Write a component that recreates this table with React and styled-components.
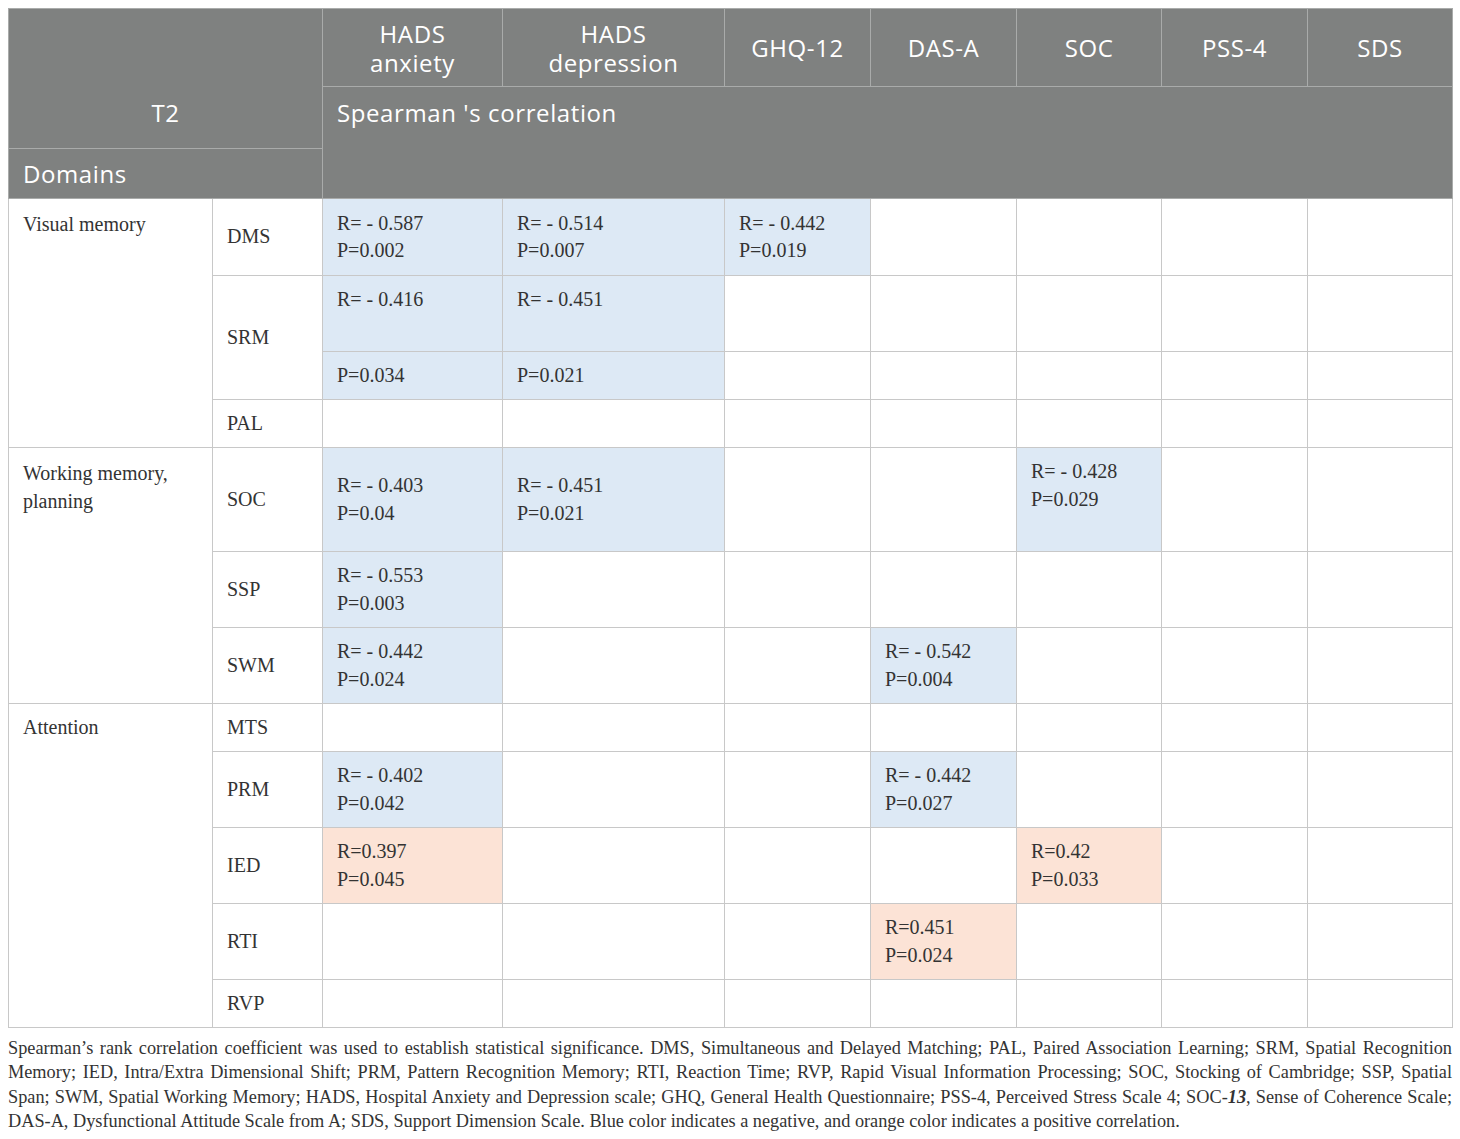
import styled, { createGlobalStyle } from "styled-components";

const GlobalStyle = createGlobalStyle`
  body {
    margin: 0;
    background: #fff;
  }
`;

const Page = styled.div`
  padding: 8px 8px 0 8px;
  width: 1444px;
`;

const Table = styled.table`
  border-collapse: collapse;
  table-layout: fixed;
  width: 1444px;
  border: 1px solid #c4c4c4;
`;

const HeadCell = styled.th`
  background: #7f8180;
  color: #fff;
  font-family: "Open Sans", Lato, sans-serif;
  font-weight: 400;
  font-size: 24px;
  letter-spacing: 0.6px;
  line-height: 29px;
  border: 1px solid #a9abaa;
  padding: ${(p) => p.$pad || "0 14px"};
  text-align: ${(p) => p.$align || "center"};
  vertical-align: ${(p) => p.$valign || "middle"};
`;

const HeadRow = styled.tr`
  height: ${(p) => p.$h}px;
`;

const Row = styled.tr`
  height: ${(p) => p.$h}px;
`;

const Cell = styled.td`
  font-family: "Liberation Serif", "Times New Roman", serif;
  font-size: 20px;
  line-height: 27.5px;
  color: #333;
  border: 1px solid #c8c8c8;
  padding: ${(p) => p.$pad || "0 14px"};
  vertical-align: ${(p) => p.$valign || "middle"};
  background: ${(p) =>
    p.$tone === "neg" ? "#dde9f5" : p.$tone === "pos" ? "#fce3d6" : "#fff"};
`;

const Note = styled.p`
  margin: 8px 0 0 0;
  font-family: "Liberation Serif", "Times New Roman", serif;
  font-size: 18.3px;
  line-height: 24.3px;
  color: #333;
  text-align: justify;
`;

const widths = [204, 110, 180, 222, 146, 146, 145, 146, 145];

const Val = ({ r, p }) => (
  <>
    {r && <div>{r}</div>}
    {p && <div>{p}</div>}
  </>
);

const blank = (n) => Array.from({ length: n }, (_, i) => i);

const App = () => {
  return (
    <Page>
      <GlobalStyle />
      <Table>
        <colgroup>
          {widths.map((w, i) => (
            <col key={i} style={{ width: w }} />
          ))}
        </colgroup>
        <thead>
          <HeadRow $h={78}>
            <HeadCell colSpan={2} rowSpan={2} $valign="bottom" $pad="0 14px 21px">
              T2
            </HeadCell>
            <HeadCell>HADS<br />anxiety</HeadCell>
            <HeadCell>HADS<br />depression</HeadCell>
            <HeadCell>GHQ-12</HeadCell>
            <HeadCell>DAS-A</HeadCell>
            <HeadCell>SOC</HeadCell>
            <HeadCell>PSS-4</HeadCell>
            <HeadCell>SDS</HeadCell>
          </HeadRow>
          <HeadRow $h={62}>
            <HeadCell colSpan={7} rowSpan={2} $align="left" $valign="top" $pad="11px 14px 0">
              Spearman 's correlation
            </HeadCell>
          </HeadRow>
          <HeadRow $h={50}>
            <HeadCell colSpan={2} $align="left">Domains</HeadCell>
          </HeadRow>
        </thead>
        <tbody>
          <Row $h={77}>
            <Cell rowSpan={4} $valign="top" $pad="12px 14px">Visual memory</Cell>
            <Cell>DMS</Cell>
            <Cell $tone="neg"><Val r="R= - 0.587" p="P=0.002" /></Cell>
            <Cell $tone="neg"><Val r="R= - 0.514" p="P=0.007" /></Cell>
            <Cell $tone="neg"><Val r="R= - 0.442" p="P=0.019" /></Cell>
            {blank(4).map((i) => <Cell key={i} />)}
          </Row>
          <Row $h={76}>
            <Cell rowSpan={2}>SRM</Cell>
            <Cell $tone="neg" $valign="top" $pad="10px 14px">R= - 0.416</Cell>
            <Cell $tone="neg" $valign="top" $pad="10px 14px">R= - 0.451</Cell>
            {blank(5).map((i) => <Cell key={i} />)}
          </Row>
          <Row $h={48}>
            <Cell $tone="neg">P=0.034</Cell>
            <Cell $tone="neg">P=0.021</Cell>
            {blank(5).map((i) => <Cell key={i} />)}
          </Row>
          <Row $h={48}>
            <Cell>PAL</Cell>
            {blank(7).map((i) => <Cell key={i} />)}
          </Row>

          <Row $h={104}>
            <Cell rowSpan={3} $valign="top" $pad="12px 14px">Working memory,<br />planning</Cell>
            <Cell>SOC</Cell>
            <Cell $tone="neg"><Val r="R= - 0.403" p="P=0.04" /></Cell>
            <Cell $tone="neg"><Val r="R= - 0.451" p="P=0.021" /></Cell>
            <Cell />
            <Cell />
            <Cell $tone="neg" $valign="top" $pad="10px 14px"><Val r="R= -  0.428" p="P=0.029" /></Cell>
            <Cell />
            <Cell />
          </Row>
          <Row $h={76}>
            <Cell>SSP</Cell>
            <Cell $tone="neg"><Val r="R= - 0.553" p="P=0.003" /></Cell>
            {blank(6).map((i) => <Cell key={i} />)}
          </Row>
          <Row $h={76}>
            <Cell>SWM</Cell>
            <Cell $tone="neg"><Val r="R= - 0.442" p="P=0.024" /></Cell>
            <Cell />
            <Cell />
            <Cell $tone="neg"><Val r="R= - 0.542" p="P=0.004" /></Cell>
            <Cell />
            <Cell />
            <Cell />
          </Row>

          <Row $h={48}>
            <Cell rowSpan={5} $valign="top" $pad="10px 14px">Attention</Cell>
            <Cell>MTS</Cell>
            {blank(7).map((i) => <Cell key={i} />)}
          </Row>
          <Row $h={76}>
            <Cell>PRM</Cell>
            <Cell $tone="neg"><Val r="R= - 0.402" p="P=0.042" /></Cell>
            <Cell />
            <Cell />
            <Cell $tone="neg"><Val r="R= - 0.442" p="P=0.027" /></Cell>
            <Cell />
            <Cell />
            <Cell />
          </Row>
          <Row $h={76}>
            <Cell>IED</Cell>
            <Cell $tone="pos"><Val r="R=0.397" p="P=0.045" /></Cell>
            <Cell />
            <Cell />
            <Cell />
            <Cell $tone="pos"><Val r="R=0.42" p="P=0.033" /></Cell>
            <Cell />
            <Cell />
          </Row>
          <Row $h={76}>
            <Cell>RTI</Cell>
            <Cell />
            <Cell />
            <Cell />
            <Cell $tone="pos"><Val r="R=0.451" p="P=0.024" /></Cell>
            <Cell />
            <Cell />
            <Cell />
          </Row>
          <Row $h={48}>
            <Cell>RVP</Cell>
            {blank(7).map((i) => <Cell key={i} />)}
          </Row>
        </tbody>
      </Table>
      <Note>
        Spearman’s rank correlation coefficient was used to establish statistical significance. DMS,
        Simultaneous and Delayed Matching; PAL, Paired Association Learning; SRM, Spatial Recognition
        Memory; IED, Intra/Extra Dimensional Shift; PRM, Pattern Recognition Memory; RTI, Reaction Time;
        RVP, Rapid Visual Information Processing; SOC, Stocking of Cambridge; SSP, Spatial Span; SWM,
        Spatial Working Memory; HADS, Hospital Anxiety and Depression scale; GHQ, General Health
        Questionnaire; PSS-4, Perceived Stress Scale 4; SOC-<b><i>13</i></b>, Sense of Coherence Scale;
        DAS-A, Dysfunctional Attitude Scale from A; SDS, Support Dimension Scale. Blue color indicates a
        negative, and orange color indicates a positive correlation.
      </Note>
    </Page>
  );
};

export default App;
